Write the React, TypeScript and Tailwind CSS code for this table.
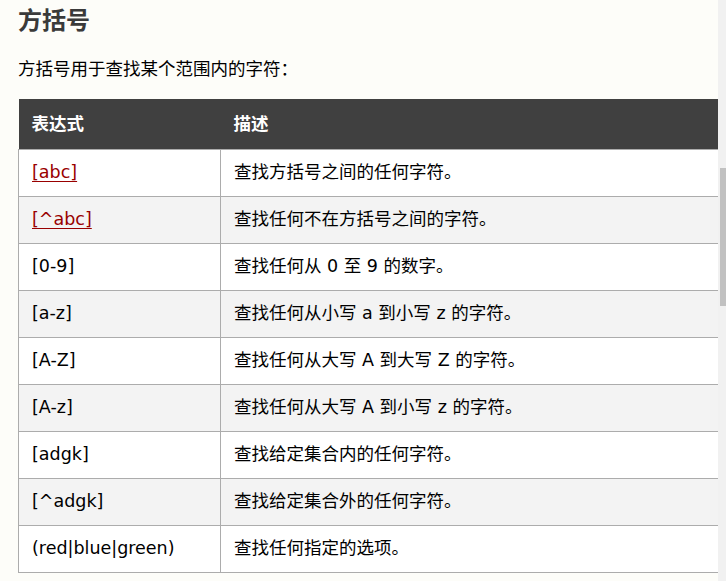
const rows: { expr: string; desc: string; link?: boolean }[] = [
  { expr: "[abc]", desc: "查找方括号之间的任何字符。", link: true },
  { expr: "[^abc]", desc: "查找任何不在方括号之间的字符。", link: true },
  { expr: "[0-9]", desc: "查找任何从 0 至 9 的数字。" },
  { expr: "[a-z]", desc: "查找任何从小写 a 到小写 z 的字符。" },
  { expr: "[A-Z]", desc: "查找任何从大写 A 到大写 Z 的字符。" },
  { expr: "[A-z]", desc: "查找任何从大写 A 到小写 z 的字符。" },
  { expr: "[adgk]", desc: "查找给定集合内的任何字符。" },
  { expr: "[^adgk]", desc: "查找给定集合外的任何字符。" },
  { expr: "(red|blue|green)", desc: "查找任何指定的选项。" },
];

export default function App() {
  return (
    <div className="flex h-[581px] w-[726px] overflow-hidden bg-[#fdfdf9] font-['DejaVu_Sans','Noto_Sans_CJK_SC',sans-serif] text-black">
      <main className="flex-1 overflow-hidden pl-[18px]">
        {/* TITLE */}
        <h2 className="mt-[6px] text-[24px] font-bold leading-[30px] text-[#3a3a3a]">
          方括号
        </h2>

        <p className="mt-[19px] text-[17.5px] leading-[28px]">
          方括号用于查找某个范围内的字符：
        </p>

        {/* TABLE */}
        <table className="mt-[16px] w-[720px] border-collapse text-[17.5px]">
          <thead>
            <tr className="h-[50px] bg-[#404040] text-left text-white">
              <th className="w-[202px] pl-[13px] font-bold">表达式</th>
              <th className="pl-[13px] font-bold">描述</th>
            </tr>
          </thead>
          <tbody>
            {rows.map((r, i) => (
              <tr
                key={r.expr}
                className={
                  i % 2 === 0
                    ? "h-[47px] border border-[#acacac] bg-white"
                    : "h-[47px] border border-[#acacac] bg-[#f3f3f3]"
                }
              >
                <td className="border border-[#acacac] pl-[13px]">
                  {r.link ? (
                    <a href="#" className="text-[#900] underline underline-offset-[3px]">
                      {r.expr}
                    </a>
                  ) : (
                    r.expr
                  )}
                </td>
                <td className="border-y border-[#acacac] pl-[13px]">{r.desc}</td>
              </tr>
            ))}
          </tbody>
        </table>
      </main>

      {/* SCROLLBAR */}
      <div className="w-[8px] shrink-0 bg-[#f1f1f1] pt-[168px]">
        <div className="ml-[2px] h-[138px] w-[6px] bg-[#c1c1c1]" />
      </div>
    </div>
  );
}
